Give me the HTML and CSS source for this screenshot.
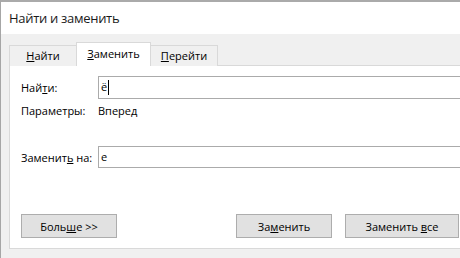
FILE: index.html
```
<!DOCTYPE html>
<html lang="ru">

<head>
    <meta charset="UTF-8">
    <title>Найти и заменить</title>
    <link rel="stylesheet" href="styles.css">
</head>

<body>
    <div class="window">
        <div class="titlebar">Найти и заменить</div>

        <div class="dialog">
            <div class="tabs">
                <div class="tab"><u>Н</u>айти</div>
                <div class="tab active"><u>З</u>аменить</div>
                <div class="tab"><u>П</u>ерейти</div>
            </div>

            <div class="panel">
                <div class="row">
                    <label class="label">Най<u>т</u>и:</label>
                    <div class="field">ё<span class="caret"></span></div>
                </div>
                <div class="row params">
                    <span class="label">Параметры:</span>
                    <span>Вперед</span>
                </div>
                <div class="row replace">
                    <label class="label">Заменит<u>ь</u> на:</label>
                    <div class="field">е</div>
                </div>

                <div class="buttons">
                    <button class="btn">Боль<u>ш</u>е &gt;&gt;</button>
                    <div class="spacer"></div>
                    <button class="btn">За<u>м</u>енить</button>
                    <button class="btn wide">Заменить <u>в</u>се</button>
                </div>
            </div>
        </div>
    </div>
</body>

</html>
```

FILE: styles.css
```
* {
    margin: 0;
    padding: 0;
    box-sizing: border-box;
}

body {
    font-family: 'Open Sans', 'Liberation Sans', sans-serif;
    font-size: 11px;
    color: #000;
    background: #f0f0f0;
    overflow: hidden;
}

.window {
    width: 460px;
    height: 258px;
    border-top: 2px solid #aaaaaa;
    border-left: 1px solid #a6a6a6;
    background: #f0f0f0;
    overflow: hidden;
}

.titlebar {
    height: 32px;
    background: #ffffff;
    padding: 7px 0 0 8px;
    font-size: 13px;
    letter-spacing: -0.3px;
    color: #1a1a1a;
}

.dialog {
    padding: 8px 0 0 8px;
    width: 540px;
}

.tabs {
    display: flex;
    align-items: flex-end;
    height: 24px;
    margin-bottom: -1px;
    position: relative;
    z-index: 1;
}

.tab {
    height: 21px;
    padding: 2px 0 0 0;
    width: 68px;
    text-align: center;
    border: 1px solid #d9d9d9;
    border-bottom: none;
    background: #f0f0f0;
}

.tab + .tab {
    margin-left: -1px;
}

.tab.active {
    height: 24px;
    width: 75px;
    padding-top: 3px;
    background: #ffffff;
    border-color: #d9d9d9;
}

.panel {
    width: 520px;
    height: 184px;
    background: #ffffff;
    border: 1px solid #d9d9d9;
    padding: 10px 0 0 11px;
}

.row {
    display: flex;
    align-items: center;
}

.label {
    width: 77px;
}

.field {
    width: 420px;
    height: 23px;
    border: 1px solid #ababab;
    padding: 2px 0 0 2px;
    display: flex;
    align-items: flex-start;
}

.caret {
    display: inline-block;
    width: 1px;
    height: 15px;
    background: #000;
    margin: 1px 0 0 1px;
}

.params {
    height: 21px;
    margin-top: 1px;
}

.replace {
    margin-top: 25px;
}

.replace .field {
    height: 22px;
}

.buttons {
    display: flex;
    margin-top: 46px;
    width: 438px;
}

.spacer {
    flex: 1;
}

.btn {
    font-family: inherit;
    font-size: 11px;
    color: #000;
    width: 96px;
    height: 24px;
    background: #e1e1e1;
    border: 1px solid #adadad;
}

.btn + .btn {
    margin-left: 13px;
}

.wide {
    width: 114px;
}
```
